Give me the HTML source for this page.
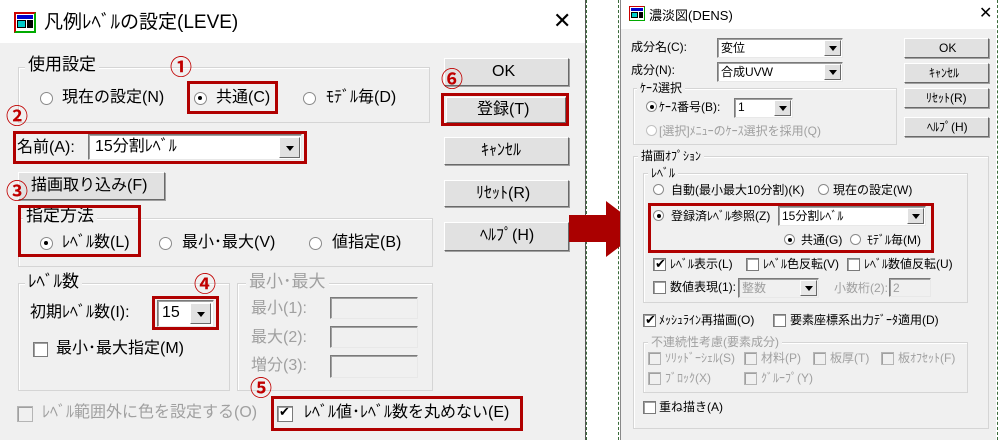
<!DOCTYPE html>
<html><head><meta charset="utf-8"><style>
*{margin:0;padding:0;box-sizing:border-box}
body{width:1000px;height:440px;background:#fff;position:relative;overflow:hidden;font-family:"Liberation Sans","Noto Sans CJK JP",sans-serif;color:#000}
div,span{position:absolute}
.dlg{background:#f0f0f0}
.tb{background:#fff}
.t{white-space:nowrap;line-height:1}
.L .t{font-size:16px}
.R .t{font-size:12px}
.g{color:#a0a0a0}
.gb{border:1px solid #d5d5d5;box-shadow:inset 1px 1px 0 #fff}
.gl{background:#f0f0f0;padding:0 3px}
.btn{background:#e1e1e1;border:1px solid;border-color:#fff #696969 #696969 #fff;box-shadow:1px 1px 0 #a0a0a0;text-align:center}
.rd{border-radius:50%;background:#fff;border:1px solid #8a8a8a}
.rd.on::after{content:"";position:absolute;left:3px;top:3px;width:4px;height:4px;border-radius:50%;background:#000}
.L .rd{width:13px;height:13px}
.R .rd{width:11px;height:11px}
.R .rd.on::after{left:2.5px;top:2.5px;width:4px;height:4px}
.cb{background:#fff;border:1px solid #7a7a7a;box-shadow:inset 1px 1px 0 #a0a0a0}
.cb.dis{background:#f0f0f0;border-color:#b5b5b5}
.edit{background:#fff;border:1px solid;border-color:#7a7a7a #e8e8e8 #e8e8e8 #7a7a7a;box-shadow:inset 1px 1px 0 #a0a0a0}
.edit.dis{background:#f0f0f0}
.dd{background:#e1e1e1;border:1px solid;border-color:#fff #696969 #696969 #fff}
.dd::after{content:"";position:absolute;left:50%;top:50%;margin-left:-4px;margin-top:-2px;border-left:4px solid transparent;border-right:4px solid transparent;border-top:5px solid #000}
.red{border:3px solid #b00000}
.num{color:#c00000;font-size:22px;font-weight:bold;line-height:1;font-family:"Noto Sans CJK JP",sans-serif}
.chk::after{content:"✔";position:absolute;left:1px;top:-3px;font-size:13px}
</style></head><body>
<div style="left:586px;top:0;width:1px;height:440px;border-left:1px dashed #3a6a3a"></div>
<div style="left:618px;top:0;width:1px;height:440px;border-left:1px dashed #3a6a3a"></div>
<div style="left:997px;top:0;width:1px;height:440px;border-left:1px dashed #3a6a3a"></div>

<!-- LEFT dialog -->
<div class="L dlg" style="left:0;top:0;width:586px;height:440px;border-right:1px solid #555">
 <div class="tb" style="left:0;top:0;width:585px;height:43px"></div>
 <div style="left:14px;top:12px;width:22px;height:21px;border:2px solid #c00;border-right-color:#0a0;border-bottom-color:#0a0;background:#fff">
  <span style="left:1px;top:1px;width:16px;height:4px;background:#00c"></span>
  <span style="left:1px;top:6px;width:9px;height:8px;background:#0cc;border:1px solid #000"></span>
  <span style="left:11px;top:6px;width:6px;height:8px;background:#000"></span>
 </div>
 <span class="t" style="left:44px;top:13px;font-size:19px">凡例ﾚﾍﾞﾙの設定(LEVE)</span>
 <span class="t" style="left:553px;top:10px;font-size:22px;font-weight:300">✕</span>

 <div class="gb" style="left:18px;top:67px;width:412px;height:56px"></div>
 <span class="t gl" style="left:25px;top:56px;font-size:17px">使用設定</span>
 <div class="rd" style="left:40px;top:92px"></div><span class="t" style="left:62px;top:90px">現在の設定(N)</span>
 <div class="rd on" style="left:194px;top:92px"></div><span class="t" style="left:216px;top:90px">共通(C)</span>
 <div class="rd" style="left:303px;top:92px"></div><span class="t" style="left:326px;top:90px">ﾓﾃﾞﾙ毎(D)</span>
 <div class="red" style="left:187px;top:81px;width:91px;height:33px"></div>
 <span class="num" style="left:170px;top:55px">①</span>

 <div class="btn" style="left:444px;top:58px;width:125px;height:28px"></div><span class="t" style="left:492px;top:64px">OK</span>
 <div class="btn" style="left:446px;top:97px;width:120px;height:26px"></div><span class="t" style="left:477px;top:102px">登録(T)</span>
 <div class="red" style="left:441px;top:93px;width:128px;height:33px"></div>
 <span class="num" style="left:441px;top:67px">⑥</span>

 <span class="num" style="left:6px;top:104px">②</span>
 <span class="t" style="left:17px;top:140px">名前(A):</span>
 <div class="edit" style="left:88px;top:134px;width:214px;height:26px"></div>
 <span class="t" style="left:95px;top:139px">15分割ﾚﾍﾞﾙ</span>
 <div class="dd" style="left:279px;top:137px;width:21px;height:21px"></div>
 <div class="red" style="left:13px;top:131px;width:294px;height:33px"></div>

 <div class="btn" style="left:444px;top:137px;width:125px;height:28px"></div><span class="t" style="left:481px;top:143px">ｷｬﾝｾﾙ</span>
 <div class="btn" style="left:18px;top:172px;width:147px;height:28px"></div><span class="t" style="left:31px;top:178px">描画取り込み(F)</span>
 <span class="num" style="left:6px;top:179px">③</span>
 <div class="btn" style="left:444px;top:180px;width:125px;height:27px"></div><span class="t" style="left:476px;top:186px">ﾘｾｯﾄ(R)</span>

 <div class="gb" style="left:18px;top:218px;width:415px;height:49px"></div>
 <span class="t gl" style="left:23px;top:207px;font-size:17px">指定方法</span>
 <div class="rd on" style="left:40px;top:237px"></div><span class="t" style="left:62px;top:235px">ﾚﾍﾞﾙ数(L)</span>
 <div class="rd" style="left:159px;top:237px"></div><span class="t" style="left:182px;top:235px">最小･最大(V)</span>
 <div class="rd" style="left:309px;top:237px"></div><span class="t" style="left:332px;top:235px">値指定(B)</span>
 <div class="red" style="left:18px;top:205px;width:123px;height:52px"></div>
 <div class="btn" style="left:444px;top:222px;width:125px;height:29px"></div><span class="t" style="left:480px;top:228px">ﾍﾙﾌﾟ(H)</span>

 <div class="gb" style="left:18px;top:283px;width:212px;height:108px"></div>
 <span class="t gl" style="left:25px;top:273px;font-size:17px">ﾚﾍﾞﾙ数</span>
 <span class="num" style="left:194px;top:272px">④</span>
 <span class="t" style="left:30px;top:305px">初期ﾚﾍﾞﾙ数(I):</span>
 <div class="edit" style="left:157px;top:300px;width:57px;height:27px"></div>
 <span class="t" style="left:162px;top:305px">15</span>
 <div class="dd" style="left:190px;top:303px;width:21px;height:21px"></div>
 <div class="red" style="left:152px;top:296px;width:67px;height:34px"></div>
 <div class="cb" style="left:33px;top:342px;width:15px;height:15px"></div>
 <span class="t" style="left:56px;top:341px">最小･最大指定(M)</span>

 <div class="gb" style="left:237px;top:283px;width:196px;height:108px"></div>
 <span class="t gl g" style="left:246px;top:273px;font-size:17px">最小･最大</span>
 <span class="t g" style="left:251px;top:301px">最小(1):</span>
 <span class="t g" style="left:251px;top:330px">最大(2):</span>
 <span class="t g" style="left:251px;top:358px">増分(3):</span>
 <div class="edit dis" style="left:330px;top:297px;width:88px;height:22px"></div>
 <div class="edit dis" style="left:330px;top:326px;width:88px;height:22px"></div>
 <div class="edit dis" style="left:330px;top:355px;width:88px;height:23px"></div>
 <span class="num" style="left:250px;top:376px">⑤</span>

 <div class="cb dis" style="left:17px;top:406px;width:16px;height:16px"></div>
 <span class="t g" style="left:42px;top:405px">ﾚﾍﾞﾙ範囲外に色を設定する(O)</span>
 <div class="cb chk" style="left:277px;top:406px;width:16px;height:16px"></div>
 <span class="t" style="left:304px;top:405px">ﾚﾍﾞﾙ値･ﾚﾍﾞﾙ数を丸めない(E)</span>
 <div class="red" style="left:271px;top:396px;width:252px;height:35px"></div>
</div>

<!-- arrow -->
<div style="left:569px;top:215px;width:40px;height:27px;background:#aa0000"></div>
<div style="left:606px;top:201px;width:0;height:0;border-top:28px solid transparent;border-bottom:28px solid transparent;border-left:37px solid #aa0000"></div>

<!-- RIGHT dialog -->
<div class="R dlg" style="left:620px;top:0;width:376px;height:440px;border-left:1px solid #888">
 <div class="tb" style="left:0;top:0;width:376px;height:29px"></div>
 <div style="left:8px;top:6px;width:16px;height:15px;border:1px solid #c00;border-right-color:#0a0;border-bottom-color:#0a0;background:#fff">
  <span style="left:1px;top:1px;width:12px;height:3px;background:#00c"></span>
  <span style="left:1px;top:5px;width:7px;height:6px;background:#0cc;border:1px solid #000"></span>
  <span style="left:9px;top:5px;width:4px;height:6px;background:#000"></span>
 </div>
 <span class="t" style="left:28px;top:9px;font-size:13px">濃淡図(DENS)</span>
 <span class="t" style="left:358px;top:6px;font-size:16px;font-weight:300">✕</span>

 <span class="t" style="left:10px;top:41px">成分名(C):</span>
 <div class="edit" style="left:96px;top:38px;width:126px;height:20px"></div><span class="t" style="left:100px;top:42px">変位</span>
 <div class="dd" style="left:203px;top:40px;width:17px;height:16px"></div>
 <span class="t" style="left:10px;top:64px">成分(N):</span>
 <div class="edit" style="left:96px;top:62px;width:126px;height:20px"></div><span class="t" style="left:100px;top:66px">合成UVW</span>
 <div class="dd" style="left:203px;top:64px;width:17px;height:16px"></div>

 <div class="btn" style="left:283px;top:38px;width:85px;height:20px"></div><span class="t" style="left:318px;top:42px">OK</span>
 <div class="btn" style="left:283px;top:63px;width:85px;height:20px"></div><span class="t" style="left:308px;top:67px">ｷｬﾝｾﾙ</span>
 <div class="btn" style="left:283px;top:88px;width:85px;height:20px"></div><span class="t" style="left:305px;top:92px">ﾘｾｯﾄ(R)</span>
 <div class="btn" style="left:283px;top:117px;width:85px;height:20px"></div><span class="t" style="left:306px;top:121px">ﾍﾙﾌﾟ(H)</span>

 <div class="gb" style="left:12px;top:88px;width:264px;height:57px"></div>
 <span class="t gl" style="left:16px;top:82px">ｹｰｽ選択</span>
 <div class="rd on" style="left:25px;top:101px"></div><span class="t" style="left:38px;top:101px">ｹｰｽ番号(B):</span>
 <div class="edit" style="left:113px;top:98px;width:59px;height:20px"></div><span class="t" style="left:117px;top:101px">1</span>
 <div class="dd" style="left:153px;top:100px;width:17px;height:16px"></div>
 <div class="rd" style="left:25px;top:125px;border-color:#c0c0c0"></div><span class="t g" style="left:38px;top:125px">[選択]ﾒﾆｭｰのｹｰｽ選択を採用(Q)</span>

 <div class="gb" style="left:12px;top:156px;width:356px;height:273px"></div>
 <span class="t gl" style="left:17px;top:150px">描画ｵﾌﾟｼｮﾝ</span>
 <div class="gb" style="left:22px;top:173px;width:325px;height:130px"></div>
 <span class="t gl" style="left:27px;top:167px">ﾚﾍﾞﾙ</span>
 <div class="rd" style="left:32px;top:184px"></div><span class="t" style="left:50px;top:184px">自動(最小最大10分割)(K)</span>
 <div class="rd" style="left:197px;top:184px"></div><span class="t" style="left:212px;top:184px">現在の設定(W)</span>
 <div class="rd on" style="left:32px;top:210px"></div><span class="t" style="left:50px;top:210px">登録済ﾚﾍﾞﾙ参照(Z)</span>
 <div class="edit" style="left:157px;top:206px;width:148px;height:20px"></div><span class="t" style="left:161px;top:210px">15分割ﾚﾍﾞﾙ</span>
 <div class="dd" style="left:286px;top:208px;width:17px;height:16px"></div>
 <div class="rd on" style="left:163px;top:234px"></div><span class="t" style="left:180px;top:234px">共通(G)</span>
 <div class="rd" style="left:229px;top:234px"></div><span class="t" style="left:246px;top:234px">ﾓﾃﾞﾙ毎(M)</span>
 <div class="red" style="left:27px;top:203px;width:286px;height:50px"></div>

 <div class="cb chk" style="left:32px;top:258px;width:13px;height:13px"></div><span class="t" style="left:49px;top:258px">ﾚﾍﾞﾙ表示(L)</span>
 <div class="cb" style="left:125px;top:258px;width:13px;height:13px"></div><span class="t" style="left:142px;top:258px">ﾚﾍﾞﾙ色反転(V)</span>
 <div class="cb" style="left:226px;top:258px;width:13px;height:13px"></div><span class="t" style="left:243px;top:258px">ﾚﾍﾞﾙ数値反転(U)</span>
 <div class="cb" style="left:32px;top:281px;width:13px;height:13px"></div><span class="t" style="left:49px;top:281px">数値表現(1):</span>
 <div class="edit dis" style="left:117px;top:278px;width:81px;height:20px"></div><span class="t g" style="left:121px;top:282px">整数</span>
 <div class="dd" style="left:179px;top:280px;width:17px;height:16px;background:#e8e8e8"></div>
 <span class="t g" style="left:213px;top:282px">小数桁(2):</span>
 <div class="edit dis" style="left:268px;top:278px;width:42px;height:19px"></div><span class="t g" style="left:272px;top:282px">2</span>

 <div class="cb chk" style="left:22px;top:314px;width:13px;height:13px"></div><span class="t" style="left:38px;top:314px">ﾒｯｼｭﾗｲﾝ再描画(O)</span>
 <div class="cb" style="left:152px;top:314px;width:13px;height:13px"></div><span class="t" style="left:169px;top:314px">要素座標系出力ﾃﾞｰﾀ適用(D)</span>

 <div class="gb" style="left:22px;top:342px;width:325px;height:51px"></div>
 <span class="t gl g" style="left:27px;top:336px">不連続性考慮(要素成分)</span>
 <div class="cb dis" style="left:27px;top:352px;width:13px;height:13px"></div><span class="t g" style="left:44px;top:352px">ｿﾘｯﾄﾞｰｼｪﾙ(S)</span>
 <div class="cb dis" style="left:123px;top:352px;width:13px;height:13px"></div><span class="t g" style="left:140px;top:352px">材料(P)</span>
 <div class="cb dis" style="left:192px;top:352px;width:13px;height:13px"></div><span class="t g" style="left:209px;top:352px">板厚(T)</span>
 <div class="cb dis" style="left:260px;top:352px;width:13px;height:13px"></div><span class="t g" style="left:277px;top:352px">板ｵﾌｾｯﾄ(F)</span>
 <div class="cb dis" style="left:27px;top:372px;width:13px;height:13px"></div><span class="t g" style="left:44px;top:372px">ﾌﾞﾛｯｸ(X)</span>
 <div class="cb dis" style="left:123px;top:372px;width:13px;height:13px"></div><span class="t g" style="left:140px;top:372px">ｸﾞﾙｰﾌﾟ(Y)</span>

 <div class="cb" style="left:22px;top:401px;width:13px;height:13px"></div><span class="t" style="left:38px;top:401px">重ね描き(A)</span>
</div>
</body></html>
